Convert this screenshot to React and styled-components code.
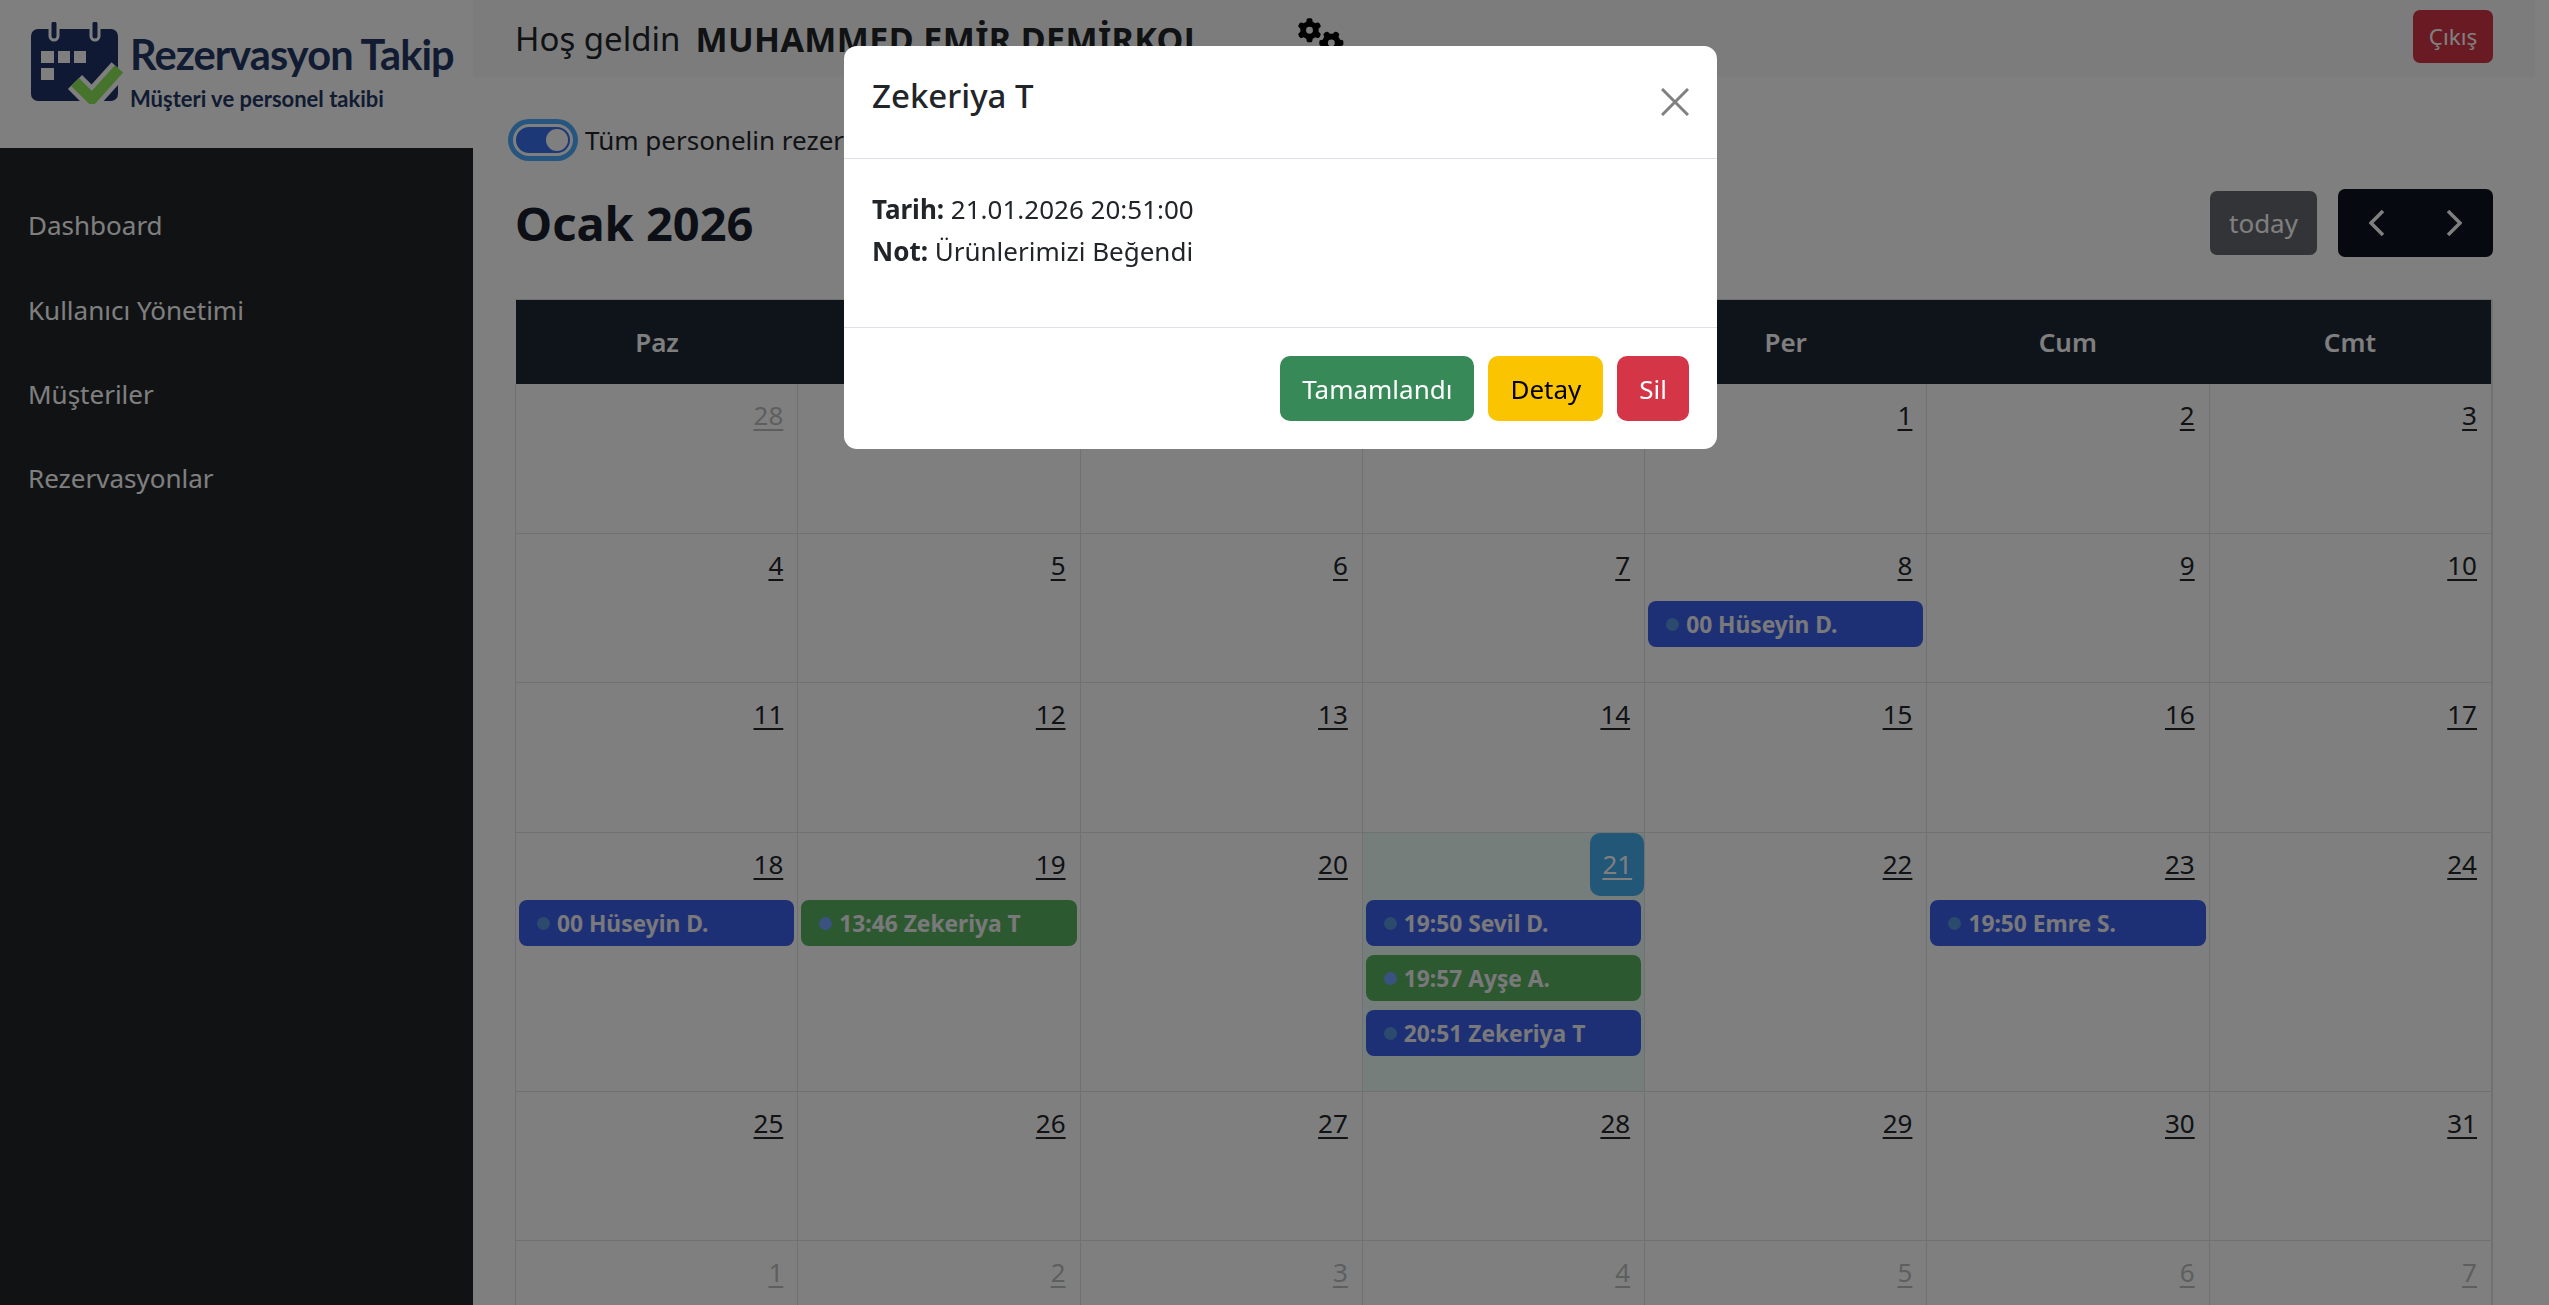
import styled, { createGlobalStyle } from "styled-components";
import { FaGears } from "react-icons/fa6";

const FONT = `"Noto Sans", "Open Sans", sans-serif`;

const GlobalStyle = createGlobalStyle`
  * { box-sizing: border-box; }
  html, body { margin: 0; height: 100%; overflow: hidden; background: #fff; }
  body { font-family: ${FONT}; font-size: 26px; color: #212529; }
`;

const Page = styled.div`
  display: flex;
  height: 100vh;
  overflow: hidden;
`;

const Sidebar = styled.aside`
  width: 473px;
  flex-shrink: 0;
  display: flex;
  flex-direction: column;
  background: #212529;
`;

const LogoBox = styled.div`
  height: 148px;
  background: #fff;
  display: flex;
  padding: 22px 0 0 31px;
  gap: 7px;
`;

const LogoText = styled.div`
  display: flex;
  flex-direction: column;
  font-family: "Lato", sans-serif;
  color: #223664;
`;

const LogoTitle = styled.div`
  font-size: 41.5px;
  line-height: 52px;
  margin-top: 6px;
  font-weight: 700;
  letter-spacing: -0.9px;
  white-space: nowrap;
`;

const LogoSub = styled.div`
  font-size: 22px;
  line-height: 28px;
  margin-top: 5px;
  font-weight: 700;
  white-space: nowrap;
`;

const Nav = styled.nav`
  display: flex;
  flex-direction: column;
  padding: 35px 0 0 28px;
`;

const NavItem = styled.a`
  height: 84.4px;
  display: flex;
  align-items: center;
  color: #fff;
`;

const Main = styled.main`
  flex: 1;
  min-width: 0;
  display: flex;
  flex-direction: column;
`;

const Topbar = styled.header`
  height: 77px;
  margin-right: 14px;
  padding: 0 42px;
  background: #f8f9fa;
  display: flex;
  align-items: flex-start;
  justify-content: space-between;
`;

const Welcome = styled.div`
  display: flex;
  align-items: center;
  height: 77px;
  font-size: 33px;
`;

const WelcomeName = styled.strong`
  margin-left: 15px;
  font-size: 34px;
  font-weight: 700;
  letter-spacing: 0.4px;
`;

const Gears = styled.span`
  display: flex;
  align-self: flex-start;
  margin: 13px 0 0 95px;
  color: #000;
  font-size: 46px;
`;

const Logout = styled.button`
  margin-top: 10px;
  width: 80px;
  height: 53px;
  border: 0;
  border-radius: 7px;
  background: #d43547;
  color: #fff;
  font: inherit;
  font-size: 22.5px;
`;

const Content = styled.div`
  padding: 0 56px 0 42px;
  display: flex;
  flex-direction: column;
`;

const ToggleRow = styled.label`
  display: flex;
  align-items: center;
  gap: 7px;
  margin-top: 42px;
  height: 42px;
`;

const Switch = styled.span`
  width: 70px;
  height: 42px;
  margin-left: -7px;
  flex-shrink: 0;
  border-radius: 21px;
  background: #4caaff;
  padding: 5px;
  display: flex;
`;

const SwitchInner = styled.span`
  flex: 1;
  border-radius: 16px;
  background: #3b70ee;
  border: 3px solid #fff;
  display: flex;
  justify-content: flex-end;
  align-items: center;
  padding-right: 2px;

  &::after {
    content: "";
    width: 22px;
    height: 22px;
    border-radius: 50%;
    background: #fff;
  }
`;

const Toolbar = styled.div`
  display: flex;
  align-items: center;
  justify-content: space-between;
  margin-top: 28px;
  height: 68px;
`;

const MonthTitle = styled.h2`
  margin: 0;
  font-size: 47px;
  font-weight: 700;
  color: #181f2d;
`;

const ToolbarRight = styled.div`
  display: flex;
  align-items: center;
  gap: 21px;
`;

const TodayButton = styled.button`
  width: 107px;
  height: 64px;
  border: 0;
  border-radius: 7px;
  background: #666870;
  color: #fff;
  font: inherit;
`;

const NavGroup = styled.div`
  width: 155px;
  height: 68px;
  border-radius: 7px;
  background: #0e1320;
  display: flex;
  color: #fff;
`;

const NavArrow = styled.span`
  flex: 1;
  display: flex;
  align-items: center;
  justify-content: center;
`;

const Calendar = styled.div`
  margin-top: 42px;
  border-top: 1px solid #dee2e6;
  border-right: 2px solid #dee2e6;
`;

const HeaderRow = styled.div`
  display: grid;
  grid-template-columns: repeat(7, 1fr);
  background: #1f2937;
  margin-left: 1px;
  height: 84px;
`;

const HeaderCell = styled.div`
  display: flex;
  align-items: center;
  justify-content: center;
  color: #fff;
  font-weight: 600;
`;

const Week = styled.div`
  display: grid;
  grid-template-columns: repeat(7, 1fr);
`;

const Day = styled.div`
  min-height: 149.6px;
  border-left: 1px solid #dee2e6;
  border-bottom: 1px solid #dee2e6;
  display: flex;
  flex-direction: column;
  background: ${(p) => (p.$today ? "#ecfdf8" : "transparent")};
  padding-bottom: ${(p) => (p.$today ? "35px" : "0")};
`;

const DayNumber = styled.a`
  align-self: flex-end;
  height: 63px;
  padding: 13px ${(p) => (p.$today ? "12px" : "14px")} 0;
  line-height: 36px;
  border-radius: 10px;
  text-decoration: underline;
  text-underline-offset: 4px;
  color: ${(p) => (p.$today ? "#fff" : "#212529")};
  opacity: ${(p) => (p.$muted ? 0.3 : 1)};
  background: ${(p) => (p.$today ? "#44aef0" : "transparent")};
`;

const Events = styled.div`
  display: flex;
  flex-direction: column;
  gap: 9px;
  padding: 4px 3px 0 3px;
`;

const Event = styled.div`
  height: 46px;
  border-radius: 8px;
  display: flex;
  align-items: center;
  gap: 7px;
  padding-left: 18px;
  padding-top: 1px;
  background: ${(p) => (p.$done ? "#5bb360" : "#3c60ea")};
  color: #f2f2f6;
  font-size: 22.75px;
  font-weight: 700;
  white-space: nowrap;
  overflow: hidden;
`;

const EventDot = styled.span`
  width: 13px;
  height: 13px;
  border-radius: 50%;
  flex-shrink: 0;
  background: ${(p) => (p.$done ? "#74a4ff" : "#5894dc")};
`;

const Backdrop = styled.div`
  position: fixed;
  inset: 0;
  background: rgba(0, 0, 0, 0.5);
`;

const Modal = styled.div`
  position: fixed;
  top: 46px;
  left: 844px;
  width: 873px;
  height: 403px;
  background: #fff;
  border-radius: 13px;
  display: flex;
  flex-direction: column;
`;

const ModalHeader = styled.div`
  height: 113px;
  padding: 0 28px 0 28px;
  border-bottom: 1px solid #dee2e6;
  display: flex;
  align-items: flex-start;
  justify-content: space-between;
`;

const ModalTitle = styled.h5`
  margin: 26px 0 0;
  font-size: 33px;
  line-height: 48px;
  font-weight: 500;
`;

const CloseIcon = styled.svg`
  margin-top: 42px;
  width: 28px;
  height: 28px;
  stroke: #808080;
  stroke-width: 3;
  fill: none;
`;

const ModalBody = styled.div`
  height: 169px;
  padding: 29px 28px 0;
  border-bottom: 1px solid #dee2e6;
  line-height: 42px;
`;

const ModalFooter = styled.div`
  flex: 1;
  padding: 28px 28px 0 0;
  display: flex;
  justify-content: flex-end;
  gap: 14px;
`;

const BUTTON_COLORS = {
  success: { bg: "#378a58", fg: "#fff" },
  warning: { bg: "#fac400", fg: "#000" },
  danger: { bg: "#d43547", fg: "#fff" },
};

const ActionButton = styled.button`
  height: 65px;
  padding: 0 22px;
  border: 0;
  border-radius: 10px;
  background: ${(p) => BUTTON_COLORS[p.$kind].bg};
  color: ${(p) => BUTTON_COLORS[p.$kind].fg};
  font: inherit;
`;

const HEADERS = ["Paz", "Pzt", "Sal", "Çar", "Per", "Cum", "Cmt"];

const EVENTS = {
  "8": [{ label: "00 Hüseyin D." }],
  "18": [{ label: "00 Hüseyin D." }],
  "19": [{ label: "13:46 Zekeriya T", done: true }],
  "21": [
    { label: "19:50 Sevil D." },
    { label: "19:57 Ayşe A.", done: true },
    { label: "20:51 Zekeriya T" },
  ],
  "23": [{ label: "19:50 Emre S." }],
};

const range = (from, to) => Array.from({ length: to - from + 1 }, (_, i) => from + i);

const WEEKS = [
  [...range(28, 31).map((n) => ({ n, muted: true })), ...range(1, 3).map((n) => ({ n }))],
  range(4, 10).map((n) => ({ n })),
  range(11, 17).map((n) => ({ n })),
  range(18, 24).map((n) => ({ n })),
  range(25, 31).map((n) => ({ n })),
  range(1, 7).map((n) => ({ n, muted: true })),
];

function LogoIcon() {
  return (
    <svg width="92" height="82" viewBox="0 0 92 82">
      <rect x="0" y="7" width="87" height="72" rx="7" fill="#1f3366" />
      <path d="M23 0v14M64 0v14" stroke="#fff" strokeWidth="11" strokeLinecap="round" />
      <path d="M23 2v12M64 2v12" stroke="#1f3366" strokeWidth="5" strokeLinecap="round" />
      <g fill="#fff">
        <rect x="10" y="29" width="13" height="12" />
        <rect x="27" y="29" width="12" height="12" />
        <rect x="43" y="29" width="12" height="12" />
        <rect x="10" y="46" width="13" height="12" />
      </g>
      <path d="M44 60l17 17 27-30" fill="none" stroke="#fff" strokeWidth="20" strokeLinejoin="miter" />
      <path d="M44 60l17 17 27-30" fill="none" stroke="#8ee858" strokeWidth="11" />
    </svg>
  );
}

function Chevron({ right }) {
  return (
    <svg width="16" height="26" viewBox="0 0 16 26" fill="none" stroke="currentColor" strokeWidth="3.5">
      <path d={right ? "M2 1l12 12L2 25" : "M14 1L2 13l12 12"} />
    </svg>
  );
}

export default function App() {
  return (
    <>
      <GlobalStyle />
      <Page>
        <Sidebar>
          <LogoBox>
            <LogoIcon />
            <LogoText>
              <LogoTitle>Rezervasyon Takip</LogoTitle>
              <LogoSub>Müşteri ve personel takibi</LogoSub>
            </LogoText>
          </LogoBox>
          <Nav>
            <NavItem>Dashboard</NavItem>
            <NavItem>Kullanıcı Yönetimi</NavItem>
            <NavItem>Müşteriler</NavItem>
            <NavItem>Rezervasyonlar</NavItem>
          </Nav>
        </Sidebar>
        <Main>
          <Topbar>
            <Welcome>
              Hoş geldin
              <WelcomeName>MUHAMMED EMİR DEMİRKOL</WelcomeName>
              <Gears><FaGears /></Gears>
            </Welcome>
            <Logout>Çıkış</Logout>
          </Topbar>
          <Content>
            <ToggleRow>
              <Switch><SwitchInner /></Switch>
              Tüm personelin rezervasyonlarını göster
            </ToggleRow>
            <Toolbar>
              <MonthTitle>Ocak 2026</MonthTitle>
              <ToolbarRight>
                <TodayButton>today</TodayButton>
                <NavGroup>
                  <NavArrow><Chevron /></NavArrow>
                  <NavArrow><Chevron right /></NavArrow>
                </NavGroup>
              </ToolbarRight>
            </Toolbar>
            <Calendar>
              <HeaderRow>
                {HEADERS.map((h) => <HeaderCell key={h}>{h}</HeaderCell>)}
              </HeaderRow>
              {WEEKS.map((week, w) => (
                <Week key={w}>
                  {week.map(({ n, muted }) => {
                    const isToday = n === 21 && !muted;
                    const events = !muted ? EVENTS[n] : null;
                    return (
                      <Day key={n} $today={isToday}>
                        <DayNumber $today={isToday} $muted={muted}>{n}</DayNumber>
                        {events && (
                          <Events>
                            {events.map((ev) => (
                              <Event key={ev.label} $done={ev.done}>
                                <EventDot $done={ev.done} />
                                {ev.label}
                              </Event>
                            ))}
                          </Events>
                        )}
                      </Day>
                    );
                  })}
                </Week>
              ))}
            </Calendar>
          </Content>
        </Main>
      </Page>
      <Backdrop />
      <Modal>
        <ModalHeader>
          <ModalTitle>Zekeriya T</ModalTitle>
          <CloseIcon viewBox="0 0 28 28"><path d="M1 1l26 26M27 1L1 27" /></CloseIcon>
        </ModalHeader>
        <ModalBody>
          <div><strong>Tarih:</strong> 21.01.2026 20:51:00</div>
          <div><strong>Not:</strong> Ürünlerimizi Beğendi</div>
        </ModalBody>
        <ModalFooter>
          <ActionButton $kind="success">Tamamlandı</ActionButton>
          <ActionButton $kind="warning">Detay</ActionButton>
          <ActionButton $kind="danger">Sil</ActionButton>
        </ModalFooter>
      </Modal>
    </>
  );
}
